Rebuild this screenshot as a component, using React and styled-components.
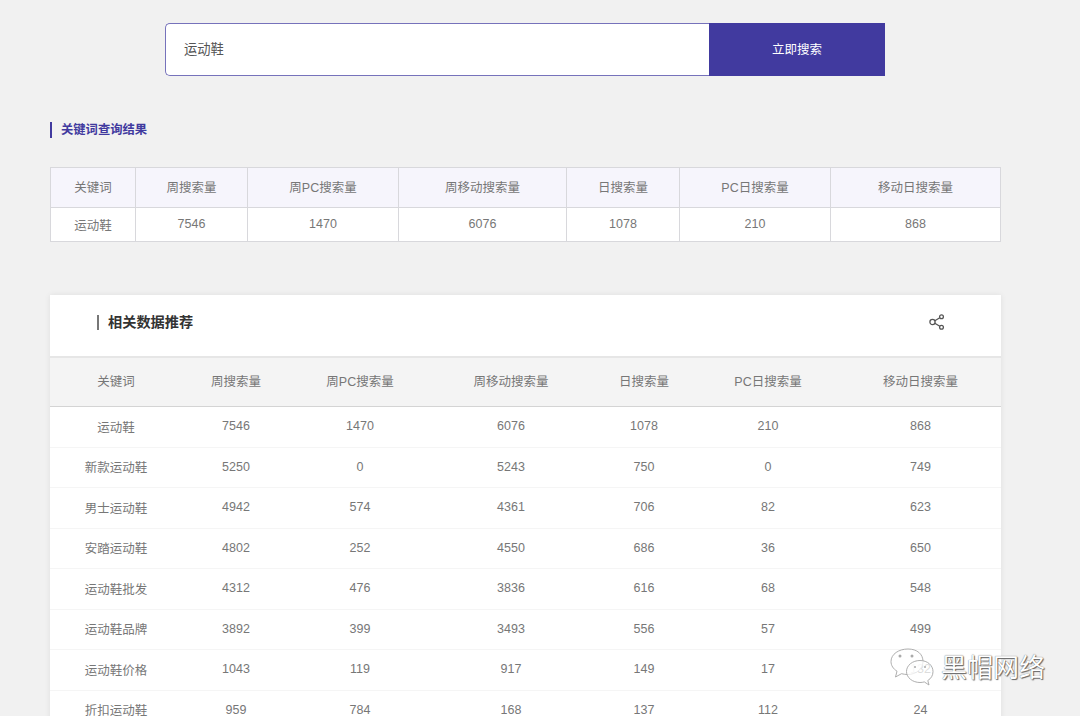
import React from 'react';
import styled, {createGlobalStyle} from 'styled-components';

const GlobalStyle = createGlobalStyle`
    html, body {
        margin: 0;
        height: 716px;
        overflow: hidden;
        background: #f1f1f1;
        font-family: "Liberation Sans", "Noto Sans CJK SC", sans-serif;
    }
`;

const Page = styled.div`
    position: relative;
    width: 1080px;
    height: 716px;
    overflow: hidden;
    padding: 23px 79px 0 50px;
    box-sizing: border-box;
`;

const SearchBar = styled.form`
    display: flex;
    width: 720px;
    height: 53px;
    margin-left: 115px;
`;

const SearchInput = styled.div`
    flex: 1;
    display: flex;
    align-items: center;
    padding: 0 0 2px 18px;
    background: #fff;
    border: 1px solid #7672bb;
    border-right: none;
    border-radius: 5px 0 0 5px;
    font-size: 13.3px;
    color: #555;
`;

const SearchButton = styled.button`
    width: 176px;
    border: none;
    padding: 0 0 2px;
    background: #413a9f;
    color: #fff;
    font-family: inherit;
    font-size: 12.5px;
`;

const ResultTitle = styled.h3`
    margin: 46px 0 0;
    height: 16px;
    line-height: 16px;
    padding-left: 9px;
    border-left: 2px solid #413a9f;
    font-size: 12.3px;
    font-weight: bold;
    color: #413a9f;
`;

const ResultTable = styled.table`
    width: 951px;
    margin-top: 29px;
    border-collapse: collapse;
    table-layout: fixed;
    background: #fff;
    font-size: 12.5px;
    color: #777;
    text-align: center;

    & th, & td {
        border: 1px solid #d8d8dc;
        font-weight: normal;
    }
    & th {
        height: 37px;
        padding: 0 0 2px;
        background: #f6f5fc;
    }
    & td {
        height: 32px;
        padding: 0 0 1px;
    }
`;

const Card = styled.section`
    width: 951px;
    height: 500px;
    margin-top: 53px;
    background: #fff;
    box-shadow: 0 0 6px rgba(0, 0, 0, 0.08);
`;

const CardHeader = styled.header`
    display: flex;
    align-items: center;
    justify-content: space-between;
    height: 55px;
    padding: 0 56px 6px 47px;
    border-bottom: 2px solid #e6e6e6;
`;

const CardTitle = styled.h2`
    margin: 0;
    padding-left: 9px;
    border-left: 2px solid #777;
    height: 15px;
    line-height: 15px;
    font-size: 14.2px;
    font-weight: bold;
    color: #333;
`;

const ShareSvg = styled.svg`
    margin-bottom: 2px;
`;

const DataTable = styled.table`
    width: 951px;
    border-collapse: separate;
    border-spacing: 0;
    table-layout: fixed;
    font-size: 12.5px;
    color: #777;
    text-align: center;

    & th {
        box-sizing: border-box;
        height: 49px;
        padding: 0 0 3px;
        font-weight: normal;
        background: #f4f4f4;
        border-bottom: 1px solid #d4d4d4;
    }
    & td {
        box-sizing: border-box;
        height: 40.5px;
        padding: 0 0 1px;
        border-bottom: 1px solid #f5f5f5;
    }
`;

const Watermark = styled.div`
    position: absolute;
    left: 890px;
    top: 648px;
    display: flex;
    align-items: center;
    gap: 6px;
    font-size: 26px;
    line-height: 40px;
    color: #fff;
    text-shadow: 0 0 1px #555, 1px 1px 1px #666;
`;

const HEAD = ['关键词', '周搜索量', '周PC搜索量', '周移动搜索量', '日搜索量', 'PC日搜索量', '移动日搜索量'];
const TOP_WIDTHS = [85, 112, 151, 168, 113, 151, 170];
const DATA_WIDTHS = [132, 108, 140, 162, 104, 144, 161];

const ROWS = [
    ['运动鞋', 7546, 1470, 6076, 1078, 210, 868],
    ['新款运动鞋', 5250, 0, 5243, 750, 0, 749],
    ['男士运动鞋', 4942, 574, 4361, 706, 82, 623],
    ['安踏运动鞋', 4802, 252, 4550, 686, 36, 650],
    ['运动鞋批发', 4312, 476, 3836, 616, 68, 548],
    ['运动鞋品牌', 3892, 399, 3493, 556, 57, 499],
    ['运动鞋价格', 1043, 119, 917, 149, 17, 132],
    ['折扣运动鞋', 959, 784, 168, 137, 112, 24],
];

const Columns = ({widths}) => (
    <colgroup>
        {widths.map((w, i) => <col key={i} width={w} />)}
    </colgroup>
);

const ShareIcon = () => (
    <ShareSvg width="16" height="16" viewBox="0 0 16 16" fill="none" stroke="#555" strokeWidth="1.3">
        <circle cx="3.500" cy="8" r="2.600" />
        <circle cx="12.500" cy="2.800" r="1.900" />
        <circle cx="12.500" cy="13.200" r="1.900" />
        <path d="M5.800 6.700l5-3M5.800 9.300l5 3" />
    </ShareSvg>
);

const WechatMark = () => (
    <svg width="45" height="40" viewBox="0 0 45 40" fill="rgba(255,255,255,0.75)" stroke="#a5a5a5" strokeWidth="0.9">
        <path d="M18 1C9 1 1 6 1 13.500c0 4 2.300 7.400 6 9.700L5.500 29l6-3.300c2 .5 4 .8 6 .8 9 0 15.500-5.800 15.500-13C33 6 27 1 18 1z" />
        <path d="M30 12.500c-7.500 0-13.500 4.900-13.500 11S22.500 34.500 30 34.500c1.500 0 3-.2 4.300-.6L39 37l-1.200-4.500c3.300-2 5.200-5 5.200-9 0-6.100-5.500-11-13-11z" />
        <circle cx="10" cy="8" r="1.500" fill="#aaa" stroke="none" />
        <circle cx="22" cy="8" r="1.500" fill="#aaa" stroke="none" />
        <circle cx="25" cy="19" r="1" fill="#aaa" stroke="none" />
        <circle cx="35" cy="19" r="1" fill="#aaa" stroke="none" />
    </svg>
);

const App = () => (
    <Page>
        <GlobalStyle />
        <SearchBar>
            <SearchInput>运动鞋</SearchInput>
            <SearchButton type="button">立即搜索</SearchButton>
        </SearchBar>

        <ResultTitle>关键词查询结果</ResultTitle>
        <ResultTable>
            <Columns widths={TOP_WIDTHS} />
            <thead>
                <tr>{HEAD.map((h) => <th key={h}>{h}</th>)}</tr>
            </thead>
            <tbody>
                <tr>{ROWS[0].map((v, i) => <td key={i}>{v}</td>)}</tr>
            </tbody>
        </ResultTable>

        <Card>
            <CardHeader>
                <CardTitle>相关数据推荐</CardTitle>
                <ShareIcon />
            </CardHeader>
            <DataTable>
                <Columns widths={DATA_WIDTHS} />
                <thead>
                    <tr>{HEAD.map((h) => <th key={h}>{h}</th>)}</tr>
                </thead>
                <tbody>
                    {ROWS.map((row) => (
                        <tr key={row[0]}>{row.map((v, i) => <td key={i}>{v}</td>)}</tr>
                    ))}
                </tbody>
            </DataTable>
        </Card>

        <Watermark>
            <WechatMark />
            <span>黑帽网络</span>
        </Watermark>
    </Page>
);

export default App;
